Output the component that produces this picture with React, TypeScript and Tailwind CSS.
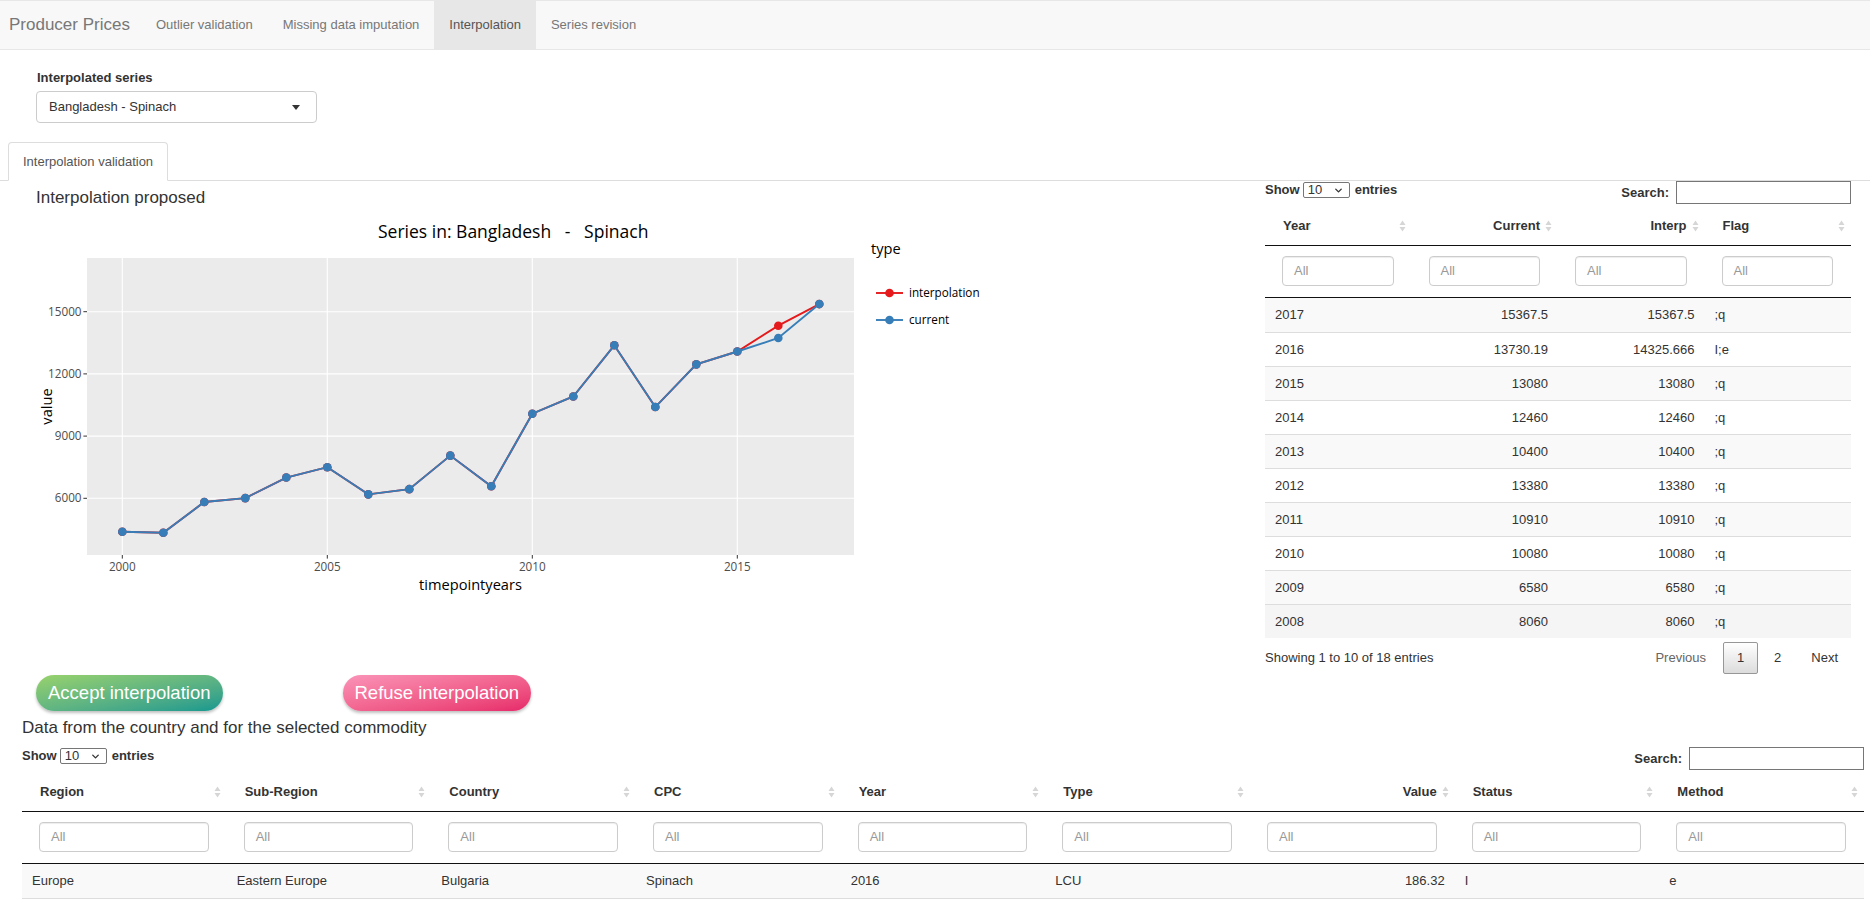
import { ChevronDown } from "lucide-react";

const YEARS = [
  2000, 2001, 2002, 2003, 2004, 2005, 2006, 2007, 2008, 2009, 2010, 2011, 2012,
  2013, 2014, 2015, 2016, 2017,
];
const CURRENT = [
  4390, 4340, 5820, 6010, 7000, 7500, 6190, 6440, 8060, 6580, 10080, 10910,
  13380, 10400, 12460, 13080, 13730.19, 15367.5,
];
const INTERP = CURRENT.map((v, i) => (YEARS[i] === 2016 ? 14325.666 : v));

const X = (yr: number) => 122.3 + (yr - 2000) * 41;
const Y = (v: number) => 311.7 + (15000 - v) * 0.020733;

function Navbar() {
  const links = ["Outlier validation", "Missing data imputation", "Interpolation", "Series revision"];
  return (
    <div className="flex h-[50px] items-stretch border-y border-[#e7e7e7] bg-[#f8f8f8] text-[#777]">
      <div className="flex items-center pl-[9px] pr-[11px] text-[17px]">Producer Prices</div>
      {links.map((l) => (
        <div
          key={l}
          className={
            l === "Interpolation"
              ? "flex items-center bg-[#e7e7e7] px-[15px] text-[#555]"
              : "flex items-center px-[15px]"
          }
        >
          {l}
        </div>
      ))}
    </div>
  );
}

function SortIcon() {
  return (
    <svg width="7" height="13" viewBox="0 0 7 13" className="absolute right-[6px] top-1/2 -translate-y-1/2">
      <path d="M0.5 5.5 L3.5 1 L6.5 5.5Z" fill="#d6d6d6" />
      <path d="M0.5 7.5 L3.5 12 L6.5 7.5Z" fill="#d6d6d6" />
    </svg>
  );
}

function Controls() {
  return (
    <div className="flex items-start justify-between">
      <div className="mt-[1px] flex h-[16px] items-center font-bold">
        <span>Show</span>
        <div className="ml-[3px] mr-[5px] flex h-[16px] w-[47px] items-center justify-between rounded-[2px] border border-[#767676] pl-[4px] pr-[5px] font-normal leading-[14px]">
          <span>10</span>
          <ChevronDown size={11} strokeWidth={3} />
        </div>
        <span>entries</span>
      </div>
      <div className="flex items-center font-bold">
        <span>Search:</span>
        <div className="ml-[7px] h-[23px] w-[175px] border border-[#767676]" />
      </div>
    </div>
  );
}

type Col = { label: string; right?: boolean };

function DataTable({
  cols,
  rows,
  grid,
  hover,
}: {
  cols: Col[];
  rows: string[][];
  grid: string;
  hover?: number;
}) {
  return (
    <div className="mt-[2px]">
      <div className={`grid ${grid} h-[40px] border-b border-[#111] font-bold`}>
        {cols.map((c) => (
          <div
            key={c.label}
            className={
              c.right
                ? "relative flex items-center justify-end px-[18px]"
                : "relative flex items-center px-[18px]"
            }
          >
            {c.label}
            <SortIcon />
          </div>
        ))}
      </div>
      <div className={`grid ${grid} h-[52px] border-b border-[#111]`}>
        {cols.map((c) => (
          <div key={c.label} className="pl-[17px] pr-[18px] pt-[10px]">
            <div className="flex h-[30px] items-center rounded-[4px] border border-[#ccc] pl-[11px] text-[#999] shadow-[inset_0_1px_1px_rgba(0,0,0,0.075)]">
              All
            </div>
          </div>
        ))}
      </div>
      {rows.map((r, i) => (
        <div
          key={i}
          className={[
            "grid h-[34px] items-center",
            grid,
            i > 0 ? "border-t border-[#ddd]" : "",
            i === hover ? "bg-[#f5f5f5]" : i % 2 === 0 ? "bg-[#f9f9f9]" : "bg-white",
          ].join(" ")}
        >
          {r.map((cell, j) => (
            <div key={j} className={cols[j].right ? "px-[10px] text-right" : "px-[10px]"}>
              {cell}
            </div>
          ))}
        </div>
      ))}
    </div>
  );
}

function Chart() {
  const curPts = YEARS.map((yr, i) => `${X(yr)},${Y(CURRENT[i])}`).join(" ");
  const intPts = YEARS.map((yr, i) => `${X(yr)},${Y(INTERP[i])}`).join(" ");
  return (
    <svg width={1000} height={400} viewBox="0 208 1000 400" className="block" fontFamily="'Open Sans', sans-serif">
      <text x={378} y={232} dy="0.35em" fontSize={17.53} fill="#000" className="whitespace-pre">
        Series in: Bangladesh   -   Spinach
      </text>
      <rect x={87} y={258} width={767} height={297} fill="#ebebeb" />
      {[2000, 2005, 2010, 2015].map((yr) => (
        <g key={yr}>
          <line x1={X(yr)} x2={X(yr)} y1={258} y2={555} stroke="#fff" strokeWidth={1.1} />
          <line x1={X(yr)} x2={X(yr)} y1={555} y2={558.6} stroke="#333" strokeWidth={1} />
          <text x={X(yr)} y={566.7} dy="0.35em" textAnchor="middle" fontSize={11.69} fill="#4d4d4d">
            {yr}
          </text>
        </g>
      ))}
      {[6000, 9000, 12000, 15000].map((v) => (
        <g key={v}>
          <line x1={87} x2={854} y1={Y(v)} y2={Y(v)} stroke="#fff" strokeWidth={1.1} />
          <line x1={83.4} x2={87} y1={Y(v)} y2={Y(v)} stroke="#333" strokeWidth={1} />
          <text x={81.5} y={Y(v)} dy="0.35em" textAnchor="end" fontSize={11.69} fill="#4d4d4d">
            {v}
          </text>
        </g>
      ))}
      <polyline points={intPts} fill="none" stroke="#e41a1c" strokeWidth={1.9} />
      {YEARS.map((yr, i) => (
        <circle key={yr} cx={X(yr)} cy={Y(INTERP[i])} r={4.3} fill="#e41a1c" />
      ))}
      <polyline points={curPts} fill="none" stroke="#377eb8" strokeWidth={1.9} />
      {YEARS.map((yr, i) => (
        <circle key={yr} cx={X(yr)} cy={Y(CURRENT[i])} r={4.3} fill="#377eb8" />
      ))}
      <text x={470.5} y={585} dy="0.35em" textAnchor="middle" fontSize={14.61} fill="#000">
        timepointyears
      </text>
      <text transform="translate(46.7,406.5) rotate(-90)" dy="0.35em" textAnchor="middle" fontSize={14.61} fill="#000">
        value
      </text>
      <text x={871} y={249.3} dy="0.35em" fontSize={14.61} fill="#000">
        type
      </text>
      {[
        { label: "interpolation", color: "#e41a1c", y: 293 },
        { label: "current", color: "#377eb8", y: 320 },
      ].map((l) => (
        <g key={l.label}>
          <line x1={876} x2={903} y1={l.y} y2={l.y} stroke={l.color} strokeWidth={1.9} />
          <circle cx={889.5} cy={l.y} r={4.3} fill={l.color} />
          <text x={909} y={l.y} dy="0.35em" fontSize={11.69} fill="#000">
            {l.label}
          </text>
        </g>
      ))}
    </svg>
  );
}

const TOP_ROWS = [
  ["2017", "15367.5", "15367.5", ";q"],
  ["2016", "13730.19", "14325.666", "I;e"],
  ["2015", "13080", "13080", ";q"],
  ["2014", "12460", "12460", ";q"],
  ["2013", "10400", "10400", ";q"],
  ["2012", "13380", "13380", ";q"],
  ["2011", "10910", "10910", ";q"],
  ["2010", "10080", "10080", ";q"],
  ["2009", "6580", "6580", ";q"],
  ["2008", "8060", "8060", ";q"],
];

export default function App() {
  return (
    <div className="min-h-screen bg-white font-['Liberation_Sans',Arial,sans-serif] text-[13px] leading-[20px] text-[#333]">
      <Navbar />
      <div className="pl-[36px]">
        <div className="mt-[20px] pl-[1px] font-bold leading-[16px]">Interpolated series</div>
        <div className="mt-[5px] flex h-[32px] w-[281px] items-center justify-between rounded-[4px] border border-[#ccc] pl-[12px] pr-[16px]">
          <span>Bangladesh - Spinach</span>
          <span className="h-0 w-0 border-x-[4px] border-t-[5px] border-x-transparent border-t-[#333]" />
        </div>
      </div>
      <div className="mt-[19px] flex border-b border-[#ddd] pl-[8px]">
        <div className="-mb-px flex h-[39px] items-center rounded-t-[4px] border border-[#ddd] border-b-transparent bg-white px-[14px] text-[#555]">
          Interpolation validation
        </div>
      </div>

      <div className="flex items-start">
        <div className="w-[1000px]">
          <div className="mt-[7px] pl-[36px] text-[17px] leading-[20px]">Interpolation proposed</div>
          <Chart />
          <div className="mt-[67px] flex gap-[120px] pl-[36px]">
            <button className="flex h-[36px] items-center rounded-full bg-linear-to-br from-[#98d26a] to-[#0b988f] px-[12px] text-[18.5px] text-white shadow-[0_2px_3px_rgba(0,0,0,0.25)]">
              Accept interpolation
            </button>
            <button className="flex h-[36px] items-center rounded-full bg-linear-to-br from-[#fa93b8] to-[#e6266a] px-[12px] text-[18.5px] text-white shadow-[0_2px_3px_rgba(0,0,0,0.25)]">
              Refuse interpolation
            </button>
          </div>
        </div>

        <div className="ml-auto mr-[19px] w-[586px]">
          <Controls />
          <DataTable
            grid="grid-cols-4"
            cols={[{ label: "Year" }, { label: "Current", right: true }, { label: "Interp", right: true }, { label: "Flag" }]}
            rows={TOP_ROWS}
            hover={9}
          />
          <div className="mt-[4px] flex h-[32px] items-center justify-between">
            <span>Showing 1 to 10 of 18 entries</span>
            <div className="flex items-center">
              <span className="px-[13px] text-[#666]">Previous</span>
              <span className="ml-[4px] flex h-[32px] w-[35px] items-center justify-center rounded-[2px] border border-[#979797] bg-linear-to-b from-white to-[#dcdcdc]">
                1
              </span>
              <span className="ml-[3px] px-[13px]">2</span>
              <span className="ml-[4px] px-[13px]">Next</span>
            </div>
          </div>
        </div>
      </div>

      <div className="mt-[7px] pl-[22px] text-[17px] leading-[20px]">Data from the country and for the selected commodity</div>
      <div className="mt-[9px] pl-[22px] pr-[6px]">
        <Controls />
        <DataTable
          grid="grid-cols-9"
          cols={[
            { label: "Region" },
            { label: "Sub-Region" },
            { label: "Country" },
            { label: "CPC" },
            { label: "Year" },
            { label: "Type" },
            { label: "Value", right: true },
            { label: "Status" },
            { label: "Method" },
          ]}
          rows={[["Europe", "Eastern Europe", "Bulgaria", "Spinach", "2016", "LCU", "186.32", "I", "e"]]}
        />
        <div className="border-t border-[#ddd]" />
      </div>
    </div>
  );
}
